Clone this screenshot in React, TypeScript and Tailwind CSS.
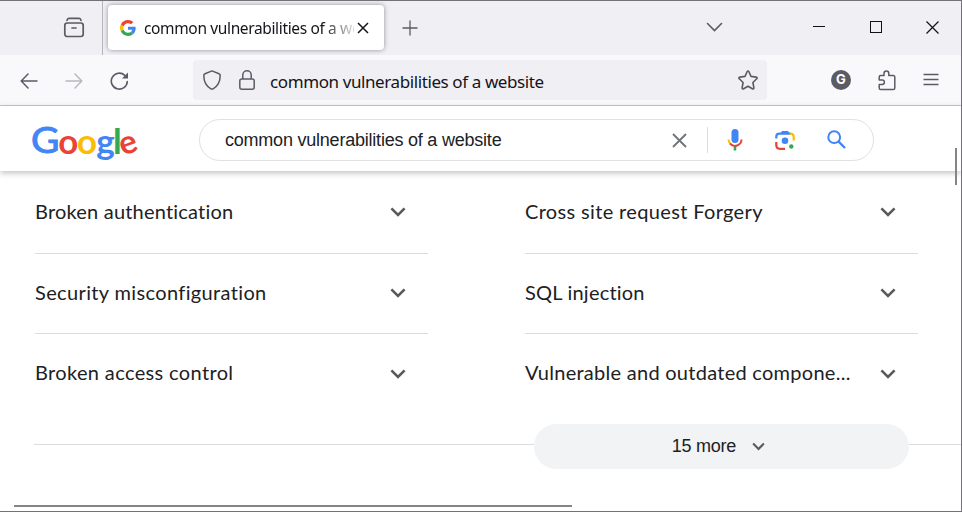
import React from "react";

const leftItems = [
  { label: "Broken authentication", cls: "tracking-[0.2px]" },
  { label: "Security misconfiguration", cls: "tracking-[0.36px]" },
  { label: "Broken access control", cls: "tracking-[0.36px]" },
];
const rightItems = [
  { label: "Cross site request Forgery", cls: "tracking-[0.35px]" },
  { label: "SQL injection", cls: "tracking-[0.21px]" },
  { label: "Vulnerable and outdated compone...", cls: "tracking-[0.27px]" },
];

function GoogleG() {
  return (
    <svg width="16" height="16" viewBox="0 0 48 48" className="shrink-0">
      <path fill="#ea4335" d="M24 9.5c3.5 0 6.700 1.200 9.200 3.600l6.900-6.900C35.900 2.400 30.500 0 24 0 14.600 0 6.500 5.400 2.600 13.200l8 6.200C12.400 13.700 17.700 9.500 24 9.500z" />
      <path fill="#4285f4" d="M47 24.500c0-1.600-.2-3.100-.4-4.500H24v9h12.900c-.6 3-2.200 5.500-4.800 7.200l7.700 6C44.400 38 47 31.800 47 24.500z" />
      <path fill="#fbbc05" d="M10.500 28.600a14.500 14.500 0 0 1 0-9.200l-8-6.200a24 24 0 0 0 0 21.600z" />
      <path fill="#34a853" d="M24 48c6.500 0 11.900-2.100 15.900-5.800l-7.700-6c-2.200 1.500-4.900 2.300-8.200 2.300-6.300 0-11.600-4.200-13.500-9.900l-8 6.200C6.500 42.600 14.600 48 24 48z" />
    </svg>
  );
}

function Wordmark() {
  return (
    <svg width="108" height="40" viewBox="0 0 108 40" className="overflow-visible font-[Lato,sans-serif]" fontSize="34" fontWeight="700">
      <text x="-1" y="29" fill="#4285f4" stroke="#4285f4" strokeWidth="0.9" fontSize="36" fontWeight="400" textLength="28.500" lengthAdjust="spacingAndGlyphs">G</text>
      <text x="26.300" y="29.500" fill="#ea4335" textLength="20" lengthAdjust="spacingAndGlyphs">o</text>
      <text x="45" y="29.500" fill="#fbbc05" textLength="20" lengthAdjust="spacingAndGlyphs">o</text>
      <text x="64.300" y="29.500" fill="#4285f4" textLength="18.500" lengthAdjust="spacingAndGlyphs">g</text>
      <text x="81" y="29.500" fill="#34a853" fontSize="35">l</text>
      <text x="87.500" y="29.500" fill="#ea4335" fontSize="33" transform="rotate(-20 96.500 20.500)">e</text>
    </svg>
  );
}

function Chevron({ small = false }: { small?: boolean }) {
  return (
    <svg width={small ? 13 : 16} height={small ? 9 : 10} viewBox="0 0 16 10" fill="none" stroke="#5a5a5a" strokeWidth="2.600" className="shrink-0">
      <path d="M1.400 1.400 8 8l6.600-6.600" />
    </svg>
  );
}

function Row({ label, cls, index }: { label: string; cls: string; index: number }) {
  const frame = ["border-b border-[#dadce0] pb-[3px]", "border-b border-[#dadce0] pb-px", ""][index];
  return (
    <div className={"flex h-20 items-center justify-between pr-[22px] " + frame}>
      <span className={"whitespace-nowrap font-[Lato,sans-serif] text-[20px] leading-6 text-[#202124] " + (index === 2 ? "pb-[5px] " : "pb-[3px] ") + cls}>{label}</span>
      <Chevron />
    </div>
  );
}

function TabStrip() {
  return (
    <div className="flex h-[54px] bg-[#f0eff4] text-[#5b5b66]">
      <div className="flex w-[103px] items-center border-r border-[#b5b5bb] pl-[63px]">
        <svg width="22" height="22" viewBox="0 0 22 22" fill="none" stroke="currentColor" strokeWidth="1.700" strokeLinecap="round">
          <path d="M4 3.400C4.300 2 4.800 1.300 5.800 1.300h10.400c1 0 1.500.7 1.800 2.100" />
          <rect x="1.800" y="6" width="18.400" height="13.500" rx="2.400" />
          <path d="M9 11h4" />
        </svg>
      </div>
      <div className="ml-[5px] mt-1 flex h-[45px] w-[276px] items-center rounded bg-white pl-3 shadow-[0_0_5px_rgba(0,0,0,0.4)]">
        <GoogleG />
        <span className="ml-2 mt-[3px] w-[210px] overflow-hidden whitespace-nowrap bg-gradient-to-r from-[#15141a] from-85% to-[#15141a22] to-100% bg-clip-text font-['Noto_Sans',sans-serif] text-[15.500px] tracking-[-0.36px] text-transparent">
          common vulnerabilities of a website
        </span>
        <svg width="12" height="12" viewBox="0 0 12 12" stroke="#15141a" strokeWidth="1.500" className="ml-[3px] shrink-0">
          <path d="m1 1 10 10M11 1 1 11" />
        </svg>
      </div>
      <div className="flex flex-1 items-center pl-[18px]">
        <svg width="16" height="16" viewBox="0 0 16 16" stroke="currentColor" strokeWidth="1.300"><path d="M8 .5v15M.5 8h15" /></svg>
        <svg width="17" height="10" viewBox="0 0 17 10" fill="none" stroke="currentColor" strokeWidth="1.600" strokeLinecap="round" className="mb-[3px] ml-[288px]"><path d="m1.500 1.500 7 7 7-7" /></svg>
        <svg width="12" height="2" className="mb-0.5 ml-[90px]"><path d="M0 .5h12" stroke="#111" /></svg>
        <svg width="12" height="12" className="mb-0.5 ml-[45px]"><rect x=".5" y=".5" width="11" height="11" fill="none" stroke="#111" /></svg>
        <svg width="13" height="13" viewBox="0 0 13 13" stroke="#111" strokeWidth="1.200" className="mb-0.5 ml-[44px]"><path d="m.5.5 12 12M12.500.5l-12 12" /></svg>
      </div>
    </div>
  );
}

function Toolbar() {
  return (
    <div className="flex h-[51px] items-center border-b border-[#c8c8cc] bg-[#f9f9fb] pl-5 text-[#5b5b66]">
      <svg width="18" height="16" viewBox="0 0 18 16" fill="none" stroke="currentColor" strokeWidth="1.500" strokeLinecap="round" strokeLinejoin="round" className="mt-px"><path d="M17 8H1.200M8 1 1.200 8 8 15" /></svg>
      <svg width="18" height="16" viewBox="0 0 18 16" fill="none" stroke="#b9b9be" strokeWidth="1.500" strokeLinecap="round" strokeLinejoin="round" className="ml-[27px] mt-px"><path d="M1 8h15.800M10 1l6.800 7L10 15" /></svg>
      <svg width="19" height="20" viewBox="0 0 19 20" fill="none" className="ml-[27px] mt-0.5">
        <path d="M14.800 4.300A8 8 0 1 0 17.300 10.500" stroke="currentColor" strokeWidth="1.600" strokeLinecap="round" />
        <path d="M18 1.500v6h-6z" fill="currentColor" />
      </svg>
      <div className="ml-16 flex h-10 w-[574px] items-center rounded bg-[#f0eff4] pl-[10px]">
        <svg width="18" height="20" viewBox="0 0 18 20" fill="none" stroke="currentColor" strokeWidth="1.500" strokeLinejoin="round"><path d="M9 .9 16 3.700c.7.300 1.200.9 1.200 1.600 0 6.200-2.300 10.900-7.100 13.500a2.300 2.300 0 0 1-2.200 0C3.100 16.200.8 11.500.8 5.300c0-.7.5-1.300 1.200-1.600z" /></svg>
        <svg width="16" height="20" viewBox="0 0 16 20" fill="none" stroke="currentColor" strokeWidth="1.500" className="ml-[18px]"><rect x=".8" y="9" width="14.400" height="10.200" rx="2" /><path d="M3.800 9V5a4.200 4.200 0 0 1 8.400 0v4" /></svg>
        <span className="ml-[15px] mt-1 flex-1 whitespace-nowrap font-['Noto_Sans',sans-serif] text-[17px] leading-6 tracking-[-0.4px] text-[#15141a]">common vulnerabilities of a website</span>
        <svg width="20" height="20" viewBox="0 0 20 20" fill="none" stroke="currentColor" strokeWidth="1.600" strokeLinejoin="round" className="mr-[9px]"><path d="M9.200 1.500a.9.900 0 0 1 1.600 0l2.200 4.900 5.200.7c.9.100 1.200 1.100.5 1.700l-3.800 3.700 1 5.300c.1.900-.7 1.400-1.500 1L10 16.200l-4.400 2.600c-.8.400-1.600-.1-1.500-1l1-5.300-3.800-3.700c-.7-.6-.4-1.600.5-1.700l5.200-.7z" /></svg>
      </div>
      <span className="ml-16 flex size-5 items-center justify-center rounded-full bg-[#5b5b66] font-[Inter,sans-serif] text-[13px] font-bold text-white">G</span>
      <svg width="20" height="21" viewBox="0 0 20 21" fill="none" stroke="currentColor" strokeWidth="1.500" strokeLinejoin="round" className="ml-[26px]">
        <path d="M7 5.500V3.400a2.400 2.400 0 0 1 4.800 0V5.500h4.400c1 0 1.600.6 1.600 1.600V18c0 1-.6 1.600-1.600 1.600H3.800c-1 0-1.600-.6-1.600-1.600v-3.600h3a2.200 2.200 0 0 0 0-4.400h-3V7.100c0-1 .6-1.600 1.600-1.600H7z" />
      </svg>
      <svg width="16" height="14" viewBox="0 0 16 14" stroke="currentColor" strokeWidth="1.300" className="ml-[26px]"><path d="M.5 1.500h15M.5 6.500h15M.5 11.500h15" /></svg>
    </div>
  );
}

function GoogleHeader() {
  return (
    <div className="relative z-10 flex h-[65px] bg-white pl-8 pt-[13px] shadow-[0_2px_6px_rgba(0,0,0,0.25)]">
      <div className="pt-[5px]"><Wordmark /></div>
      <div className="ml-[59px] flex h-[42px] w-[675px] items-center rounded-full border border-[#dfe1e5] pl-[25px]">
        <span className="flex-1 whitespace-nowrap font-['Liberation_Sans',sans-serif] text-[18px] tracking-[-0.22px] text-[#202124]">common vulnerabilities of a website</span>
        <svg width="15" height="15" viewBox="0 0 15 15" stroke="#70757a" strokeWidth="1.900"><path d="m1 1 13 13M14 1 1 14" /></svg>
        <div className="ml-5 h-[26px] w-px bg-[#dadce0]" />
        <svg width="16" height="22" viewBox="0 0 16 22" fill="none" strokeWidth="2" className="ml-[19px]">
          <rect x="4.500" y="0" width="7" height="14" rx="3.500" fill="#4285f4" />
          <path d="M1.500 10.500a6.500 6.500 0 0 0 1.800 4.300" stroke="#fbbc04" />
          <path d="M3 14.500a6.500 6.500 0 0 0 11.500-4" stroke="#ea4335" />
          <path d="M8 17.500V21.500" stroke="#34a853" strokeWidth="2.600" />
        </svg>
        <svg width="20" height="20" viewBox="0 0 20 20" fill="none" strokeWidth="2.200" className="ml-8">
          <path d="M1.300 8.500V6.700c0-1.800 1.200-3 3-3h11" stroke="#4285f4" />
          <path d="M5.500 3.500 7 1h6l1.700 2.700" fill="#4285f4" />
          <path d="M15 3.700c2.400 0 3.700 1.200 3.700 3v3.700" stroke="#fbbc04" />
          <path d="M1.300 12v3c0 2.300 1.200 3.800 3.700 3.800h5" stroke="#ea4335" />
          <circle cx="10" cy="10.800" r="3.300" fill="#4285f4" />
          <circle cx="16.300" cy="16.500" r="2.200" fill="#34a853" />
        </svg>
        <svg width="19" height="19" viewBox="0 0 19 19" fill="none" stroke="#4285f4" strokeWidth="2" className="mb-0.5 ml-[32px] mr-[27px]"><circle cx="7.200" cy="7.200" r="5.900" /><path d="m11.400 11.400 6.600 6.600" strokeWidth="2.300" /></svg>
      </div>
    </div>
  );
}

export default function App() {
  return (
    <div className="relative flex h-[512px] w-[962px] flex-col overflow-hidden border-b border-r border-t border-[#747278] bg-white">
      <TabStrip />
      <Toolbar />
      <GoogleHeader />
      <div className="flex gap-[97px] pl-[35px] pt-[3px]">
        {[leftItems, rightItems].map((items, c) => (
          <div key={c} className="w-[393px]">
            {items.map((item, i) => <Row key={item.label} label={item.label} cls={item.cls} index={i} />)}
          </div>
        ))}
      </div>
      <div className="mt-[10px] flex pl-[34px]">
        <div className="mt-5 h-px w-[500px] bg-[#dadce0]" />
        <button className="flex h-[45px] w-[375px] items-center justify-center gap-4 rounded-full bg-[#f1f3f4] pr-[6px] font-['Liberation_Sans',sans-serif] text-[18px] tracking-[-0.25px] text-[#202124]">
          15 more
          <Chevron small />
        </button>
        <div className="mt-5 h-px flex-1 bg-[#dadce0]" />
      </div>
      <div className="absolute left-[955px] top-[147px] z-20 h-[37px] w-0.5 bg-[#858585]" />
      <div className="absolute left-[14px] top-[504px] h-0.5 w-[558px] bg-[#858585]" />
    </div>
  );
}
